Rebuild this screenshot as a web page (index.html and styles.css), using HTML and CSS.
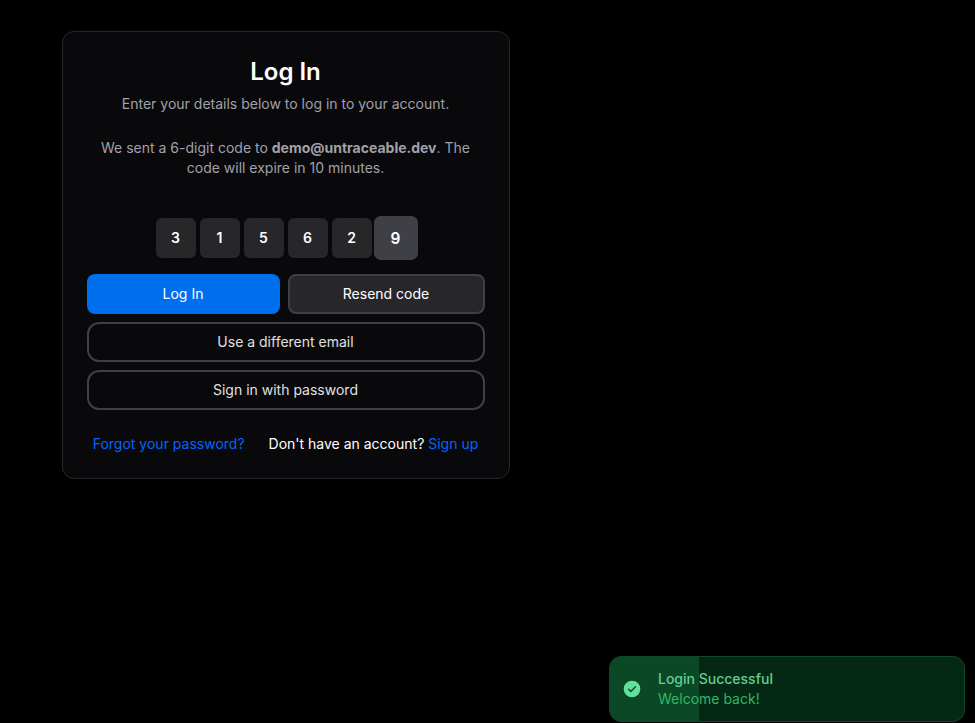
FILE: index.html
```
<!DOCTYPE html>
<html lang="en">

<head>
    <meta charset="UTF-8">
    <meta name="viewport" content="width=device-width, initial-scale=1.0">
    <title>Log In</title>
    <link rel="stylesheet" href="styles.css">
</head>

<body>
    <main class="card">
        <h1>Log In</h1>
        <p class="subtitle">Enter your details below to log in to your account.</p>
        <p class="message">We sent a 6-digit code to <strong>demo@untraceable.dev</strong>. The code will expire in 10 minutes.</p>

        <div class="otp">
            <div class="digit">3</div>
            <div class="digit">1</div>
            <div class="digit">5</div>
            <div class="digit">6</div>
            <div class="digit">2</div>
            <div class="digit active">9</div>
        </div>

        <div class="actions">
            <div class="row">
                <button class="btn primary">Log In</button>
                <button class="btn secondary">Resend code</button>
            </div>
            <button class="btn outline">Use a different email</button>
            <button class="btn outline">Sign in with password</button>
        </div>

        <div class="links">
            <a href="#">Forgot your password?</a>
            <span>Don't have an account? <a href="#">Sign up</a></span>
        </div>
    </main>

    <div class="toast">
        <div class="toast-progress"></div>
        <svg class="toast-icon" width="20" height="20" viewBox="0 0 24 24">
            <circle cx="12" cy="12" r="10" fill="#62df98" />
            <path d="M7.9 12.2l2.8 2.8 5.5-5.6" fill="none" stroke="#0a4826" stroke-width="1.6" stroke-linecap="round" stroke-linejoin="round" />
        </svg>
        <div class="toast-text">
            <div class="toast-title">Login Successful</div>
            <div class="toast-description">Welcome back!</div>
        </div>
    </div>
</body>

</html>
```
FILE: styles.css
```
* {
    box-sizing: border-box;
}

body {
    margin: 0;
    padding: 31px 0 0 62px;
    font-family: 'Inter', sans-serif;
    font-size: 14px;
    line-height: 20px;
    color: #fff;
    background: #000;
}

.card {
    width: 448px;
    padding: 24px;
    background: #09090b;
    border: 1px solid #27272a;
    border-radius: 12px;
}

h1 {
    margin: 0 0 6px;
    padding-right: 1px;
    font-size: 24px;
    line-height: 32px;
    font-weight: 600;
    text-align: center;
}

.subtitle,
.message {
    margin: 0;
    padding-right: 1px;
    color: #a1a1aa;
    text-align: center;
}

.message {
    margin-top: 24px;
}

.message strong {
    font-weight: 700;
}

.otp {
    display: flex;
    justify-content: center;
    gap: 4px;
    margin: 40px 0 16px;
}

.digit {
    width: 40px;
    height: 40px;
    padding-right: 1px;
    background: #27272a;
    border-radius: 6px;
    font-weight: 600;
    line-height: 40px;
    text-align: center;
}

.digit.active {
    background: #3f3f46;
    transform: scale(1.1);
}

.actions {
    display: flex;
    flex-direction: column;
    gap: 8px;
}

.row {
    display: grid;
    grid-template-columns: 193px 1fr;
    gap: 8px;
}

.btn {
    height: 40px;
    padding: 0 1px 0 0;
    border: 0;
    border-radius: 8px;
    font-family: inherit;
    font-size: 14px;
    line-height: 20px;
    color: #fff;
    cursor: pointer;
}

.btn.primary {
    background: #006fee;
}

.btn.secondary {
    background: #27272a;
    border: 2px solid #3f3f46;
}

.btn.outline {
    background: transparent;
    border: 2px solid #3f3f46;
    border-radius: 12px;
    color: #e0e0e1;
}

.links {
    display: flex;
    justify-content: center;
    gap: 24px;
    margin-top: 24px;
    padding-right: 1px;
}

.links a {
    color: #0066ff;
    text-decoration: none;
}

.toast {
    position: fixed;
    right: 10px;
    bottom: 1px;
    display: flex;
    align-items: center;
    width: 356px;
    height: 66px;
    padding: 0 12px;
    overflow: hidden;
    background: #052814;
    border: 1px solid #0e4929;
    border-radius: 12px;
}

.toast-progress {
    position: absolute;
    top: 0;
    left: 0;
    bottom: 0;
    width: 89px;
    background: #0a4826;
}

.toast-icon,
.toast-text {
    position: relative;
}

.toast-text {
    margin-left: 16px;
}

.toast-title {
    font-weight: 500;
    color: #62ce90;
}

.toast-description {
    color: #2eb868;
}
```
